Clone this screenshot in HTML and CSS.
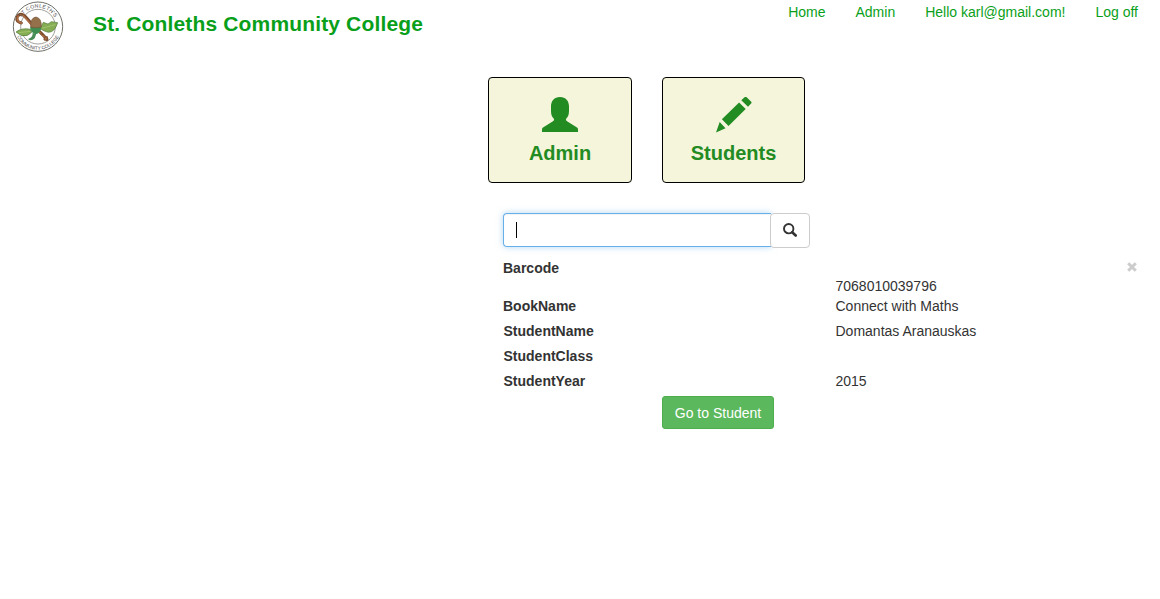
FILE: index.html
```html
<!DOCTYPE html>
<html lang="en">
<head>
<meta charset="utf-8">
<title>St. Conleths Community College</title>
<link rel="stylesheet" href="styles.css">
</head>
<body>
<header class="header">
  <svg class="logo" viewBox="36 0 156 162" aria-label="School crest">
    <defs>
      <path id="arc-top" d="M57 80 A57 57 0 0 1 171 80"/>
      <path id="arc-bottom" d="M45 80 A69 69 0 0 0 183 80"/>
    </defs>
    <circle cx="114" cy="80" r="74" fill="#fff" stroke="#6f6f68" stroke-width="3"/>
    <circle cx="114" cy="80" r="52" fill="#fff" stroke="#8c8c84" stroke-width="2.5"/>
    <path d="M64 69 Q48 65 51 52 Q58 38 70 45 Q80 52 98 76 L125 101 L141 118" fill="none" stroke="#7b4a2c" stroke-width="9" stroke-linecap="round"/>
    <path d="M64 69 Q49 64 53 52 Q59 41 70 47 L96 76 L140 117" fill="none" stroke="#ad6d44" stroke-width="5" stroke-linecap="round"/>
    <path d="M48 96 Q66 82 92 88 L95 97 Q83 111 65 107 Z" fill="#84ad54" stroke="#56783c" stroke-width="2"/>
    <path d="M120 86 L130 67 L144 72 L154 65 L173 68 Q164 97 145 97 L133 93 Z" fill="#84ad54" stroke="#56783c" stroke-width="2"/>
    <path d="M56 98 L91 94 M125 85 L166 74" stroke="#b2cb79" stroke-width="2"/>
    <path d="M98 99 Q99 113 84 117 Q93 126 104 115 L109 101Z" fill="#4a8c55"/>
    <path d="M90 82 Q106 74 124 82 Q122 101 107 103 Q93 99 90 82Z" fill="#3f8d50"/>
    <path d="M92 81 Q91 53 108 51 Q125 54 124 81 Q107 86 92 81Z" fill="#94704b" stroke="#775637" stroke-width="2"/>
    <path d="M120 101 L130 104 M133 112 L142 110 L141 121 L132 120Z" fill="#b0754f" stroke="#7b4a2c" stroke-width="3"/>
    <text class="crest-text"><textPath href="#arc-top" startOffset="50%" text-anchor="middle">ST CONLETH'S</textPath></text>
    <text class="crest-text crest-small"><textPath href="#arc-bottom" startOffset="50%" text-anchor="middle">COMMUNITY COLLEGE</textPath></text>
  </svg>
  <h1 class="title">St. Conleths Community College</h1>
  <nav class="nav">
    <a>Home</a><a>Admin</a><a>Hello karl@gmail.com!</a><a>Log off</a>
  </nav>
</header>
<main class="main">
  <div class="tiles">
    <a class="tile">
      <svg class="tile-icon" viewBox="0 0 36 36"><path d="M18 0C12.2 0 9 4 9 9.5V14C9 18 10.2 20 11.7 21.5Q13 23 11 24.3L1 30.5Q0 31.2 0 32.5V35H36V32.5Q36 31.2 35 30.5L25 24.3Q23 23 24.3 21.5C25.8 20 27 18 27 14V9.5C27 4 23.8 0 18 0Z"/></svg>
      <span>Admin</span>
    </a>
    <a class="tile tile-students">
      <svg class="tile-icon" viewBox="0.5 1.5 36 36"><path d="M29 1.8Q30.2 .8 31.4 2L35.5 6Q36.6 7 35.6 8L32.5 11.2L25.8 4.8ZM23.6 7L30.2 13.4L13 30.4L6.4 23.8ZM4.2 26.5L10 32.7L.5 37Z"/></svg>
      <span>Students</span>
    </a>
  </div>
  <form class="search">
    <div class="search-input"><span class="caret"></span></div>
    <button class="search-button" type="button" aria-label="Search">
      <svg viewBox="0 0 14 14"><circle cx="5.7" cy="5.7" r="4.7"/><path d="M9.2 9.2L12.7 12.5"/></svg>
    </button>
  </form>
  <dl class="details">
    <div class="row row-barcode"><dt>Barcode</dt><dd>7068010039796</dd>
      <svg class="close" viewBox="0 0 10 10"><path d="M1.2 1.2L8.8 8.8M8.8 1.2L1.2 8.8"/></svg>
    </div>
    <div class="row row-book"><dt>BookName</dt><dd>Connect with Maths</dd></div>
    <div class="row"><dt>StudentName</dt><dd>Domantas Aranauskas</dd></div>
    <div class="row"><dt>StudentClass</dt><dd></dd></div>
    <div class="row"><dt>StudentYear</dt><dd>2015</dd></div>
  </dl>
  <button class="go" type="button">Go to Student</button>
</main>
</body>
</html>
```
FILE: styles.css
```css
* { box-sizing: border-box; }
body {
  margin: 0;
  background: #fff;
  color: #333;
  font: 14px/20px "Liberation Sans", Arial, sans-serif;
}
.header {
  display: flex;
  align-items: flex-start;
  height: 77px;
  padding: 0 22px 0 12px;
}
.logo { width: 52px; height: 54px; }
.crest-text {
  font: 15.5px "Liberation Sans", Arial, sans-serif;
  fill: #44443f;
  letter-spacing: 1px;
}
.crest-small { font-size: 14px; letter-spacing: 0; }
.title {
  margin: 12px 0 0 29px;
  color: #0a9f1a;
  font-size: 21px;
  line-height: 24px;
  letter-spacing: 0.15px;
  white-space: nowrap;
}
.nav {
  display: flex;
  gap: 30px;
  margin: 2px 0 0 auto;
  color: #0a9f1a;
  white-space: nowrap;
}
.main { padding-left: 488px; }
.tiles { display: flex; gap: 30px; }
.tile {
  display: flex;
  flex-direction: column;
  align-items: center;
  width: 144px;
  height: 106px;
  padding-top: 19px;
  border: 1px solid #000;
  border-radius: 4px;
  background: #f5f5dc;
  color: #228b22;
  font-size: 20px;
  font-weight: bold;
  line-height: 24px;
}
.tile-students { width: 143px; }
.tile-icon { width: 36px; height: 36px; margin-bottom: 8px; fill: currentColor; }
.search { display: flex; width: 307px; margin: 30px 0 0 15px; }
.search-input {
  width: 268px;
  height: 34px;
  padding: 8px 12px;
  border: 1px solid #66afe9;
  border-right: 0;
  border-radius: 4px 0 0 4px;
  box-shadow: inset 0 1px 1px rgba(0, 0, 0, .05), 0 0 6px rgba(102, 175, 233, .5);
}
.caret { display: block; width: 1px; height: 16px; background: #000; }
.search-button {
  position: relative;
  display: flex;
  align-items: flex-start;
  justify-content: center;
  width: 40px;
  height: 35px;
  margin-left: -1px;
  padding: 9px 0 0;
  border: 1px solid #ccc;
  border-radius: 4px;
  background: #fff;
}
.search-button svg { width: 14px; height: 14px; fill: none; stroke: #333; stroke-width: 1.9; }
.search-button path { stroke-width: 2.6; stroke-linecap: round; }
.details { margin: 10px 0 0 15px; }
.row { display: grid; grid-template-columns: 332px 291px 11px; height: 25px; padding-left: .5px; }
.row dt { font-weight: bold; }
.row dd { margin: 0; }
.row-barcode { height: 38px; padding-left: 0; }
.row-barcode dd { padding: 18px 0 0 .5px; }
.row-book { padding-left: 0; }
.row-book dd { padding-left: .5px; }
.close { width: 10px; height: 10px; margin-top: 4px; margin-left: 1px; fill: none; stroke: #ccc; stroke-width: 3; }
.go {
  display: block;
  width: 112px;
  height: 33px;
  margin: 0 0 0 174px;
  padding: 0;
  border: 1px solid #4cae4c;
  border-radius: 3px;
  background: #5cb85c;
  color: #fff;
  font: 14px/20px "Liberation Sans", Arial, sans-serif;
}
```
